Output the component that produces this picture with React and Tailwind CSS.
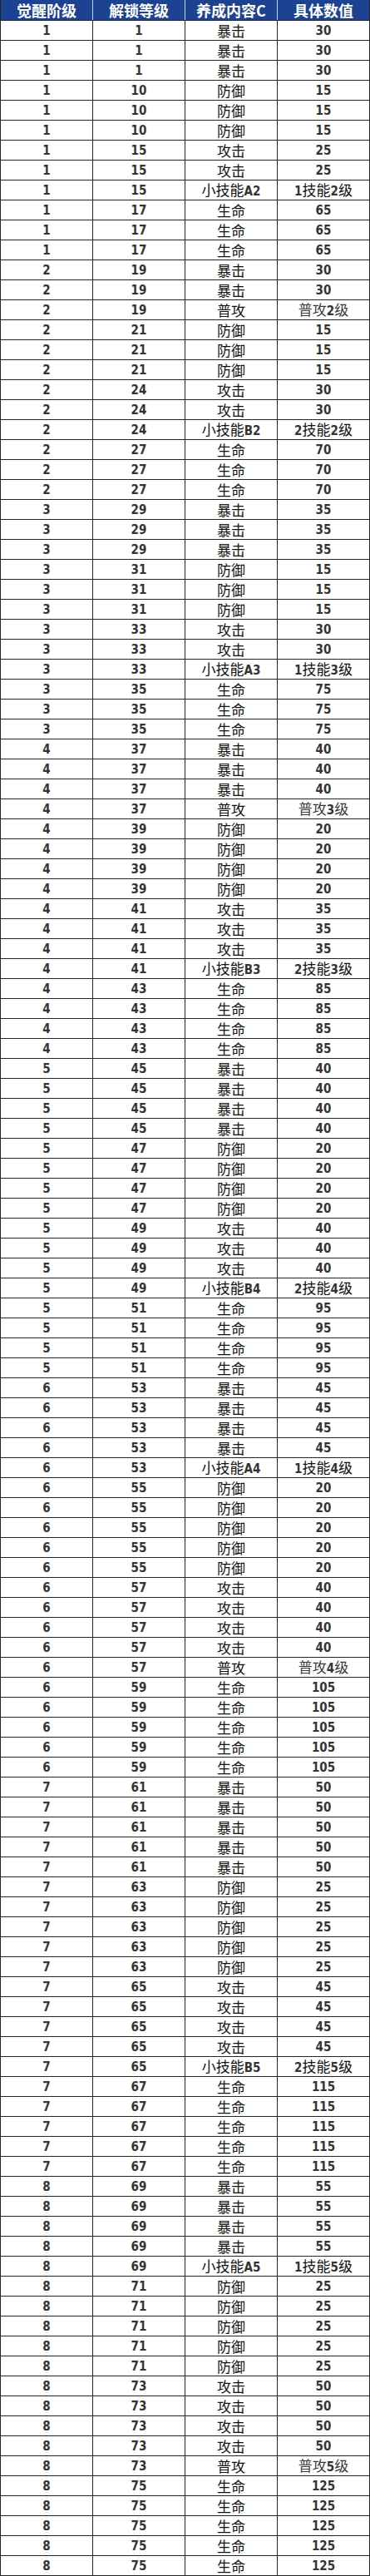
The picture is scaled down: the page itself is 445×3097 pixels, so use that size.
import React from "react";

const groups = [
  [1, 1, "暴击", "30", 3],
  [1, 10, "防御", "15", 3],
  [1, 15, "攻击", "25", 2],
  [1, 15, "小技能A2", "1技能2级", 1],
  [1, 17, "生命", "65", 3],
  [2, 19, "暴击", "30", 2],
  [2, 19, "普攻", "普攻2级", 1],
  [2, 21, "防御", "15", 3],
  [2, 24, "攻击", "30", 2],
  [2, 24, "小技能B2", "2技能2级", 1],
  [2, 27, "生命", "70", 3],
  [3, 29, "暴击", "35", 3],
  [3, 31, "防御", "15", 3],
  [3, 33, "攻击", "30", 2],
  [3, 33, "小技能A3", "1技能3级", 1],
  [3, 35, "生命", "75", 3],
  [4, 37, "暴击", "40", 3],
  [4, 37, "普攻", "普攻3级", 1],
  [4, 39, "防御", "20", 4],
  [4, 41, "攻击", "35", 3],
  [4, 41, "小技能B3", "2技能3级", 1],
  [4, 43, "生命", "85", 4],
  [5, 45, "暴击", "40", 4],
  [5, 47, "防御", "20", 4],
  [5, 49, "攻击", "40", 3],
  [5, 49, "小技能B4", "2技能4级", 1],
  [5, 51, "生命", "95", 4],
  [6, 53, "暴击", "45", 4],
  [6, 53, "小技能A4", "1技能4级", 1],
  [6, 55, "防御", "20", 5],
  [6, 57, "攻击", "40", 4],
  [6, 57, "普攻", "普攻4级", 1],
  [6, 59, "生命", "105", 5],
  [7, 61, "暴击", "50", 5],
  [7, 63, "防御", "25", 5],
  [7, 65, "攻击", "45", 4],
  [7, 65, "小技能B5", "2技能5级", 1],
  [7, 67, "生命", "115", 5],
  [8, 69, "暴击", "55", 4],
  [8, 69, "小技能A5", "1技能5级", 1],
  [8, 71, "防御", "25", 5],
  [8, 73, "攻击", "50", 4],
  [8, 73, "普攻", "普攻5级", 1],
  [8, 75, "生命", "125", 5],
];

const rows = [];
groups.forEach(([a, b, c, d, n]) => {
  for (let i = 0; i < n; i++) rows.push([String(a), String(b), c, d]);
});

const NUM = "font-['DejaVu_Sans_Condensed','DejaVu_Sans',sans-serif] font-bold text-[15px] leading-[20px] text-[#333333]";
const CJK = "font-['Noto_Sans_CJK_SC',sans-serif] font-normal text-[17px] leading-[20px] text-[#111111]";
const CJK_GRAY = "font-['Noto_Sans_CJK_SC',sans-serif] font-normal text-[17px] leading-[20px] text-[#3a3a3a]";

function Mixed({ text, cjkClass = CJK }) {
  const parts = text.match(/[A-Za-z0-9]+|[^A-Za-z0-9]+/g) || [];
  return (
    <span className="inline-flex items-baseline whitespace-nowrap">
      {parts.map((p, i) =>
        /^[A-Za-z0-9]+$/.test(p) ? (
          <span key={i} className={NUM + " text-[#2a2a2a]"}>
            {p}
          </span>
        ) : (
          <span key={i} className={cjkClass}>
            {p}
          </span>
        )
      )}
    </span>
  );
}

function Cell({ children }) {
  return (
    <div className="flex items-center justify-center border-r border-[#262626]">
      {children}
    </div>
  );
}

export default function App() {
  return (
    <div className="w-[445px] bg-white">
      <div className="grid h-[24px] grid-cols-4 border-l border-[#262626] bg-[#1d4291]">
        {["觉醒阶级", "解锁等级", "养成内容C", "具体数值"].map((h, i) => (
          <div
            key={i}
            className={
              "flex items-center justify-center border-r " +
              (i === 3 ? "border-[#262626]" : "border-[#c9d3e6]")
            }
          >
            <span className="font-['Noto_Sans_CJK_SC',sans-serif] text-[18px] font-bold leading-[22px] text-white">
              {h}
            </span>
          </div>
        ))}
      </div>
      <div className="border-l border-t border-[#262626]">
        {rows.map((r, i) => (
          <div
            key={i}
            className="grid h-[24px] grid-cols-4 border-b border-[#262626]"
          >
            <Cell>
              <span className={NUM}>{r[0]}</span>
            </Cell>
            <Cell>
              <span className={NUM}>{r[1]}</span>
            </Cell>
            <Cell>
              <Mixed text={r[2]} />
            </Cell>
            <Cell>
              {/^[0-9]+$/.test(r[3]) ? (
                <span className={NUM}>{r[3]}</span>
              ) : (
                <Mixed
                  text={r[3]}
                  cjkClass={r[3].startsWith("普攻") ? CJK_GRAY : CJK}
                />
              )}
            </Cell>
          </div>
        ))}
      </div>
    </div>
  );
}
